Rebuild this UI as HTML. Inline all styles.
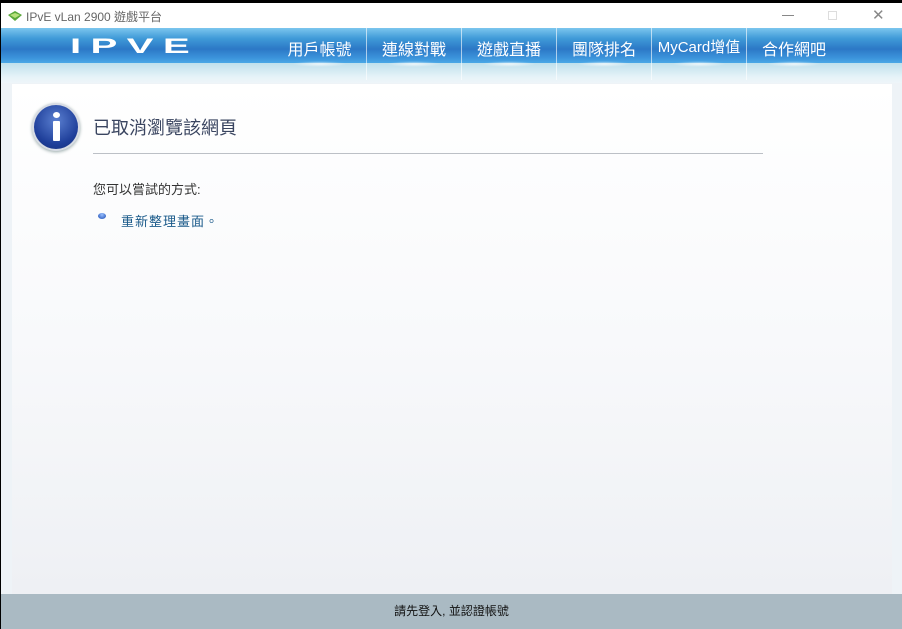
<!DOCTYPE html>
<html><head><meta charset="utf-8"><style>
*{margin:0;padding:0;box-sizing:border-box}
body{width:902px;height:629px;overflow:hidden;background:#000;font-family:"Liberation Sans","Noto Sans CJK TC",sans-serif;position:relative}
.win{position:absolute;left:1px;top:3px;right:0;bottom:0;background:#eef3f7}
.title{position:absolute;left:0;top:0;right:0;height:25px;background:#fff;font-size:12px;color:#666}
.title span{position:absolute;left:25px;top:5px}
.nav{position:absolute;left:0;top:25px;right:0;height:35px;background:linear-gradient(#7cc6ee 0%,#3f9ad8 30%,#2c78c6 60%,#3b93db 85%,#4aa8e6 100%)}
.sub{position:absolute;left:0;top:60px;right:0;height:20px;background:linear-gradient(#bfe0ec,#e6f3f8 70%,#eef5f9)}
.logo{position:absolute;left:69px;top:30px;color:#fff;font:900 26px/26px "Liberation Sans",sans-serif;letter-spacing:6px;transform:scale(1.55,0.8);transform-origin:left center}
.item{position:absolute;top:25px;height:52px;width:95px;text-align:center;color:#fff;font-size:16px;padding-top:8px}
.sep{border-left:1px solid rgba(255,255,255,.6)}
.item::after{content:"";position:absolute;left:20px;right:20px;top:33px;height:6px;background:radial-gradient(ellipse,rgba(255,255,255,.7),rgba(255,255,255,0) 70%)}
.panel{position:absolute;left:11px;top:81px;width:880px;height:510px;background:linear-gradient(#fff,#f8f9fb 50%,#eef0f4)}
.foot{position:absolute;left:0;top:591px;right:0;bottom:0;background:#aabac3;text-align:center;font-size:12px;color:#111;padding-top:8px}
.icon{position:absolute;left:22px;top:21px;width:44px;height:44px;border-radius:50%;background:radial-gradient(circle at 50% 35%,#5a7fd0,#1f3f9a 65%,#142d78);box-shadow:0 0 0 2px #d8dce4,0 1px 3px 2px #9aa}
.icon b{position:absolute;left:19px;top:7px;width:7px;height:6px;border-radius:50%;background:#fff}
.icon i{position:absolute;left:19px;top:16px;width:7px;height:20px;background:#fff;border-radius:1px}
h1{position:absolute;left:81px;top:30px;font-weight:normal;font-size:18px;color:#3a4560}
.hr{position:absolute;left:81px;top:69px;width:670px;height:1px;background:#bcc0c6}
.p{position:absolute;left:81px;top:95px;font-size:13px;color:#333}
.dot{position:absolute;left:86px;top:129px;width:8px;height:6px;border-radius:50%;background:radial-gradient(circle at 50% 30%,#9ac0ff,#1546b0)}
.lk{position:absolute;left:109px;top:127px;font-size:13px;color:#1a5a8a;letter-spacing:1px}
.ctl{position:absolute;top:4px;font-size:14px;color:#888}
</style></head><body>
<div class="win">
<div class="title"><svg style="position:absolute;left:6px;top:7px" width="16" height="12"><path d="M1 5 L8 1 L15 5 L8 11Z" fill="#5aa83a"/><path d="M3 5 L8 3 L13 5 L8 8Z" fill="#b6e07a"/></svg><span>IPvE vLan 2900 遊戲平台</span>
<div style="position:absolute;left:781px;top:12px;width:12px;height:1px;background:#888"></div><div style="position:absolute;left:827px;top:8px;width:9px;height:9px;border:1px solid #ddd"></div><div class="ctl" style="left:871px;top:3px;font-size:15px">✕</div></div>
<div class="nav"></div>
<div class="sub"></div>
<div class="logo">IPVE</div>
<div class="item" style="left:271px">用戶帳號</div>
<div class="item sep" style="left:365px">連線對戰</div>
<div class="item sep" style="left:460px">遊戲直播</div>
<div class="item sep" style="left:555px">團隊排名</div>
<div class="item sep" style="left:650px;font-size:15px">MyCard增值</div>
<div class="item sep" style="left:745px">合作網吧</div>
<div class="panel">
<div class="icon"><b></b><i></i></div>
<h1>已取消瀏覽該網頁</h1>
<div class="hr"></div>
<div class="p">您可以嘗試的方式:</div>
<div class="dot"></div>
<div class="lk">重新整理畫面。</div>
</div>
<div class="foot">請先登入, 並認證帳號</div>
</div>
</body></html>
